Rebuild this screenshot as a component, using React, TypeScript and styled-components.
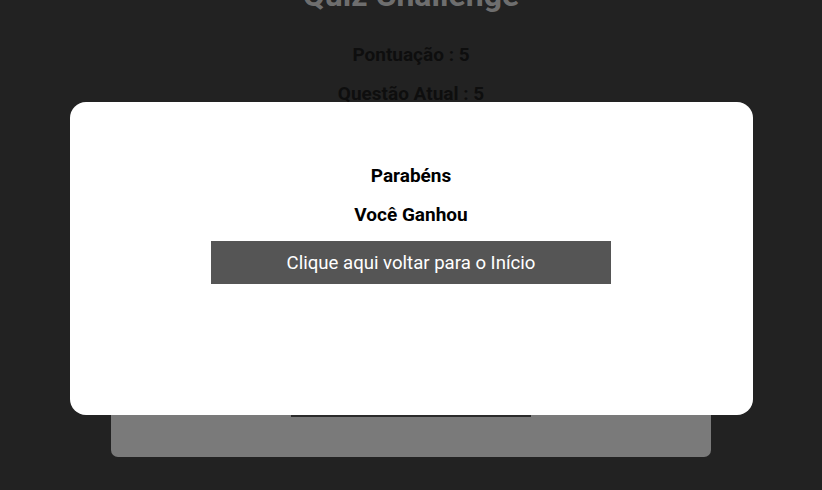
import React from "react";
import styled, { createGlobalStyle } from "styled-components";

const Global = createGlobalStyle`
  html, body {
    margin: 0;
    padding: 0;
    background: #222222;
    font-family: Roboto, "Liberation Sans", Arial, sans-serif;
    overflow: hidden;
  }
  * { box-sizing: border-box; }
`;

const Page = styled.main`
  display: flex;
  flex-direction: column;
  align-items: center;
  height: 490px;
`;

const Title = styled.h1`
  margin: -23px 0 0;
  font-size: 32px;
  font-weight: 700;
  line-height: 37.5px;
  color: #6e6e6e;
`;

const Stat = styled.p<{ $top: number }>`
  margin: ${(p) => p.$top}px 0 0;
  font-size: 19px;
  font-weight: 700;
  line-height: 21px;
  color: #0e0e0e;
`;

const Card = styled.section`
  margin-top: 20px;
  width: 600px;
  height: 333px;
  background: #7a7a7a;
  border-radius: 7px;
  display: flex;
  flex-direction: column;
  align-items: center;
  justify-content: flex-end;
  padding-bottom: 40px;
`;

const NextButton = styled.button`
  width: 240px;
  height: 40px;
  border: none;
  background: #2b2b2b;
  color: #ffffff;
  font-family: inherit;
  font-size: 16px;
`;

const Overlay = styled.div`
  position: fixed;
  inset: 0;
  display: flex;
  justify-content: center;
  align-items: flex-start;
  padding-top: 102px;
`;

const Modal = styled.div`
  width: 683px;
  height: 313px;
  background: #ffffff;
  border-radius: 16px;
  display: flex;
  flex-direction: column;
  align-items: center;
  padding-top: 63px;
`;

const Message = styled.p<{ $top: number }>`
  margin: ${(p) => p.$top}px 0 0;
  font-size: 19px;
  font-weight: 700;
  line-height: 21px;
  color: #000000;
`;

const HomeButton = styled.button`
  margin-top: 16px;
  width: 400px;
  height: 43px;
  border: none;
  background: #555555;
  color: #ffffff;
  font-family: inherit;
  font-size: 18.6px;
  font-weight: 400;
  cursor: pointer;
`;

export default function App() {
  return (
    <>
      <Global />
      <Page>
        <Title>Quiz Challenge</Title>
        <Stat $top={29}>Pontuação : 5</Stat>
        <Stat $top={18}>Questão Atual : 5</Stat>
        <Card>
          <NextButton>Próxima</NextButton>
        </Card>
      </Page>
      <Overlay>
        <Modal>
          <Message $top={0}>Parabéns</Message>
          <Message $top={18}>Você Ganhou</Message>
          <HomeButton>Clique aqui voltar para o Início</HomeButton>
        </Modal>
      </Overlay>
    </>
  );
}
